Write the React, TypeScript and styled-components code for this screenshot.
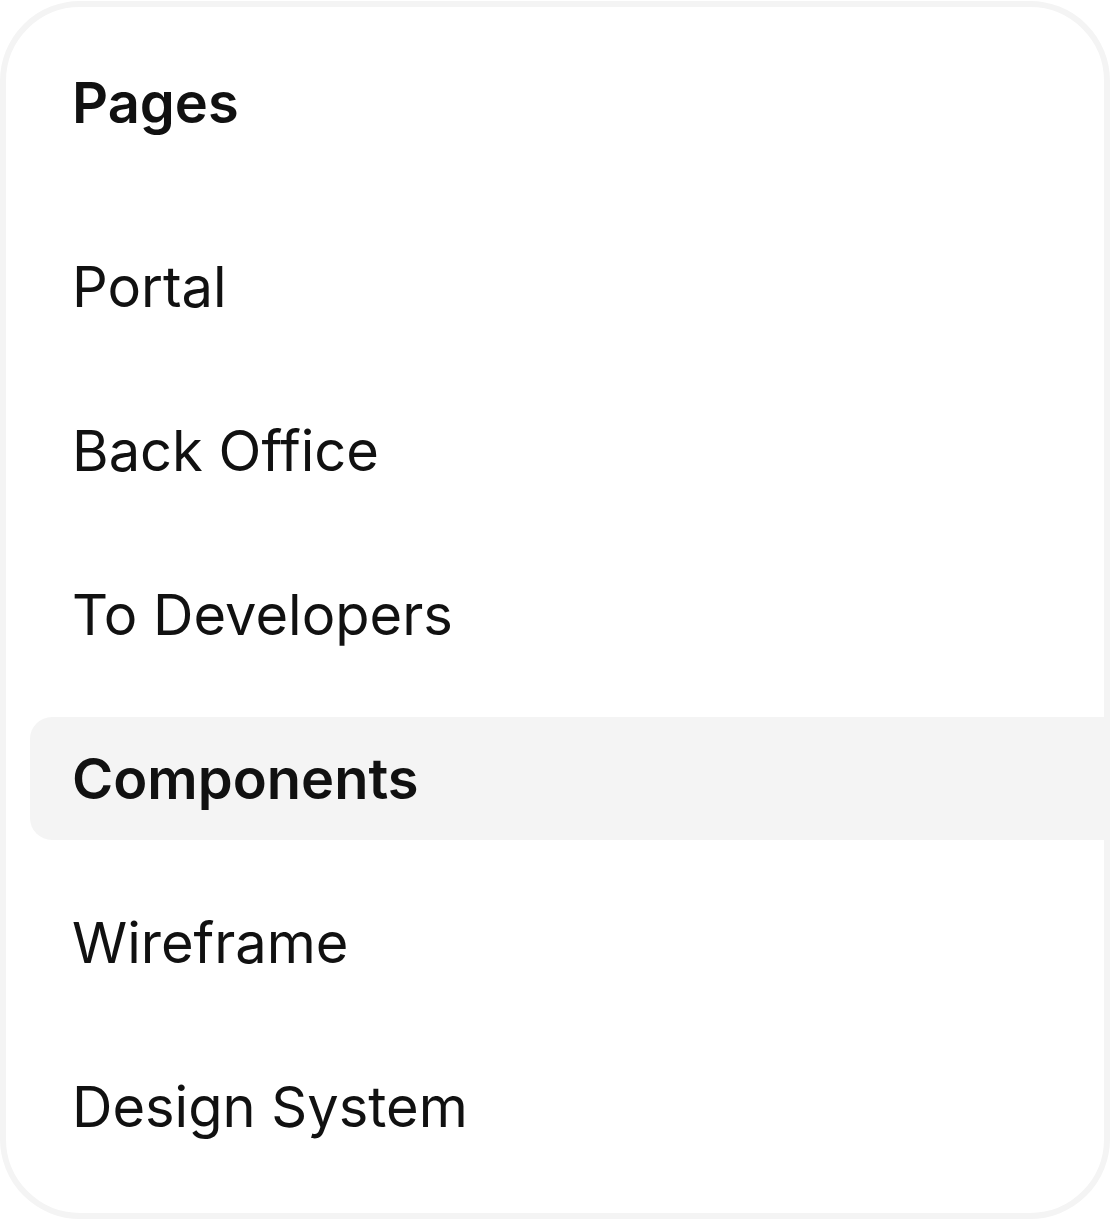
import React from "react";
import styled, { createGlobalStyle } from "styled-components";

const GlobalStyle = createGlobalStyle`
  html, body {
    margin: 0;
    padding: 0;
    background: #ffffff;
  }
  body {
    font-family: Inter, "Noto Sans", "Liberation Sans", sans-serif;
    color: #111111;
    -webkit-font-smoothing: antialiased;
  }
`;

const Card = styled.nav`
  box-sizing: border-box;
  width: 1110px;
  height: 1218px;
  margin-top: 1px;
  border: 6px solid #f4f4f4;
  border-radius: 80px;
  background: #ffffff;
  overflow: hidden;
  padding: 62px 0 45px 24px;
  display: flex;
  flex-direction: column;
`;

const Heading = styled.h2`
  margin: 0 0 88px;
  padding-left: 42px;
  font-size: 56px;
  line-height: 68px;
  font-weight: 600;
  color: #111111;
`;

const List = styled.ul`
  list-style: none;
  margin: 0;
  padding: 0;
  display: flex;
  flex-direction: column;
  gap: 41px;
`;

const Item = styled.li<{ $active?: boolean }>`
  height: 123px;
  display: flex;
  align-items: center;
  padding-left: 42px;
  border-radius: 22px 0 0 22px;
  background: ${(p) => (p.$active ? "#f4f4f4" : "transparent")};
  font-size: 56px;
  line-height: 68px;
  font-weight: ${(p) => (p.$active ? 600 : 400)};
  color: #111111;
`;

const pages = [
  "Portal",
  "Back Office",
  "To Developers",
  "Components",
  "Wireframe",
  "Design System",
];

export default function App() {
  const selected = "Components";
  return (
    <>
      <GlobalStyle />
      <Card>
        <Heading>Pages</Heading>
        <List>
          {pages.map((page) => (
            <Item key={page} $active={page === selected}>
              {page}
            </Item>
          ))}
        </List>
      </Card>
    </>
  );
}
